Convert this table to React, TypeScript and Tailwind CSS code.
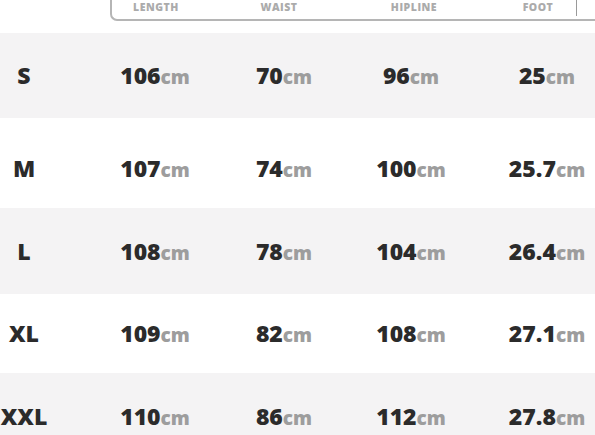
import React from 'react';

type Row = { size: string; values: string[]; shaded: boolean; rowClass: string };

const rows: Row[] = [
  { size: 'S', values: ['106', '70', '96', '25'], shaded: true, rowClass: 'h-[85px]' },
  { size: 'M', values: ['107', '74', '100', '25.7'], shaded: false, rowClass: 'h-[90px] pt-[10px]' },
  { size: 'L', values: ['108', '78', '104', '26.4'], shaded: true, rowClass: 'h-[86px]' },
  { size: 'XL', values: ['109', '82', '108', '27.1'], shaded: false, rowClass: 'h-[79px]' },
  { size: 'XXL', values: ['110', '86', '112', '27.8'], shaded: true, rowClass: 'h-[86px]' },
];

function Value({ n }: { n: string }) {
  return (
    <div className="flex items-baseline justify-center whitespace-nowrap">
      <span className="text-[23px] font-extrabold text-[#2b2b2b] leading-none">{n}</span>
      <span className="text-[19px] font-extrabold text-[#9d9d9d] leading-none">cm</span>
    </div>
  );
}

export default function App() {
  return (
    <div
      className="w-[595px] h-[435px] overflow-hidden bg-white"
      style={{ fontFamily: '"Open Sans", "Noto Sans", sans-serif' }}
    >
      {/* header strip */}
      <div className="h-[33px] pl-[110px]">
        <div className="h-[21px] w-[520px] border-2 border-t-0 border-r-0 border-[#b5b5b5] rounded-bl-[7px] flex items-center text-[10.5px] font-extrabold tracking-[0.05em] text-[#ababab] leading-none">
          <div className="w-[88px] text-center -mt-[5px]">LENGTH</div>
          <div className="w-[158px] text-center -mt-[5px]">WAIST</div>
          <div className="w-[112px] text-center -mt-[5px]">HIPLINE</div>
          <div className="w-[48px]" />
          <div className="w-[40px] text-center -mt-[5px]">FOOT</div>
          <div className="ml-[18px] w-px h-[16px] self-start bg-[#9a9a9a]" />
        </div>
      </div>

      {rows.map((r) => (
        <div
          key={r.size}
          className={`${r.rowClass} ${r.shaded ? 'bg-[#f4f3f4]' : 'bg-white'} grid grid-cols-[90px_130px_128px_126px_146px] items-center`}
        >
          <div className="w-12 text-center text-[23px] font-extrabold text-[#2b2b2b] leading-none">{r.size}</div>
          {r.values.map((v, i) => (
            <Value key={i} n={v} />
          ))}
        </div>
      ))}
    </div>
  );
}
